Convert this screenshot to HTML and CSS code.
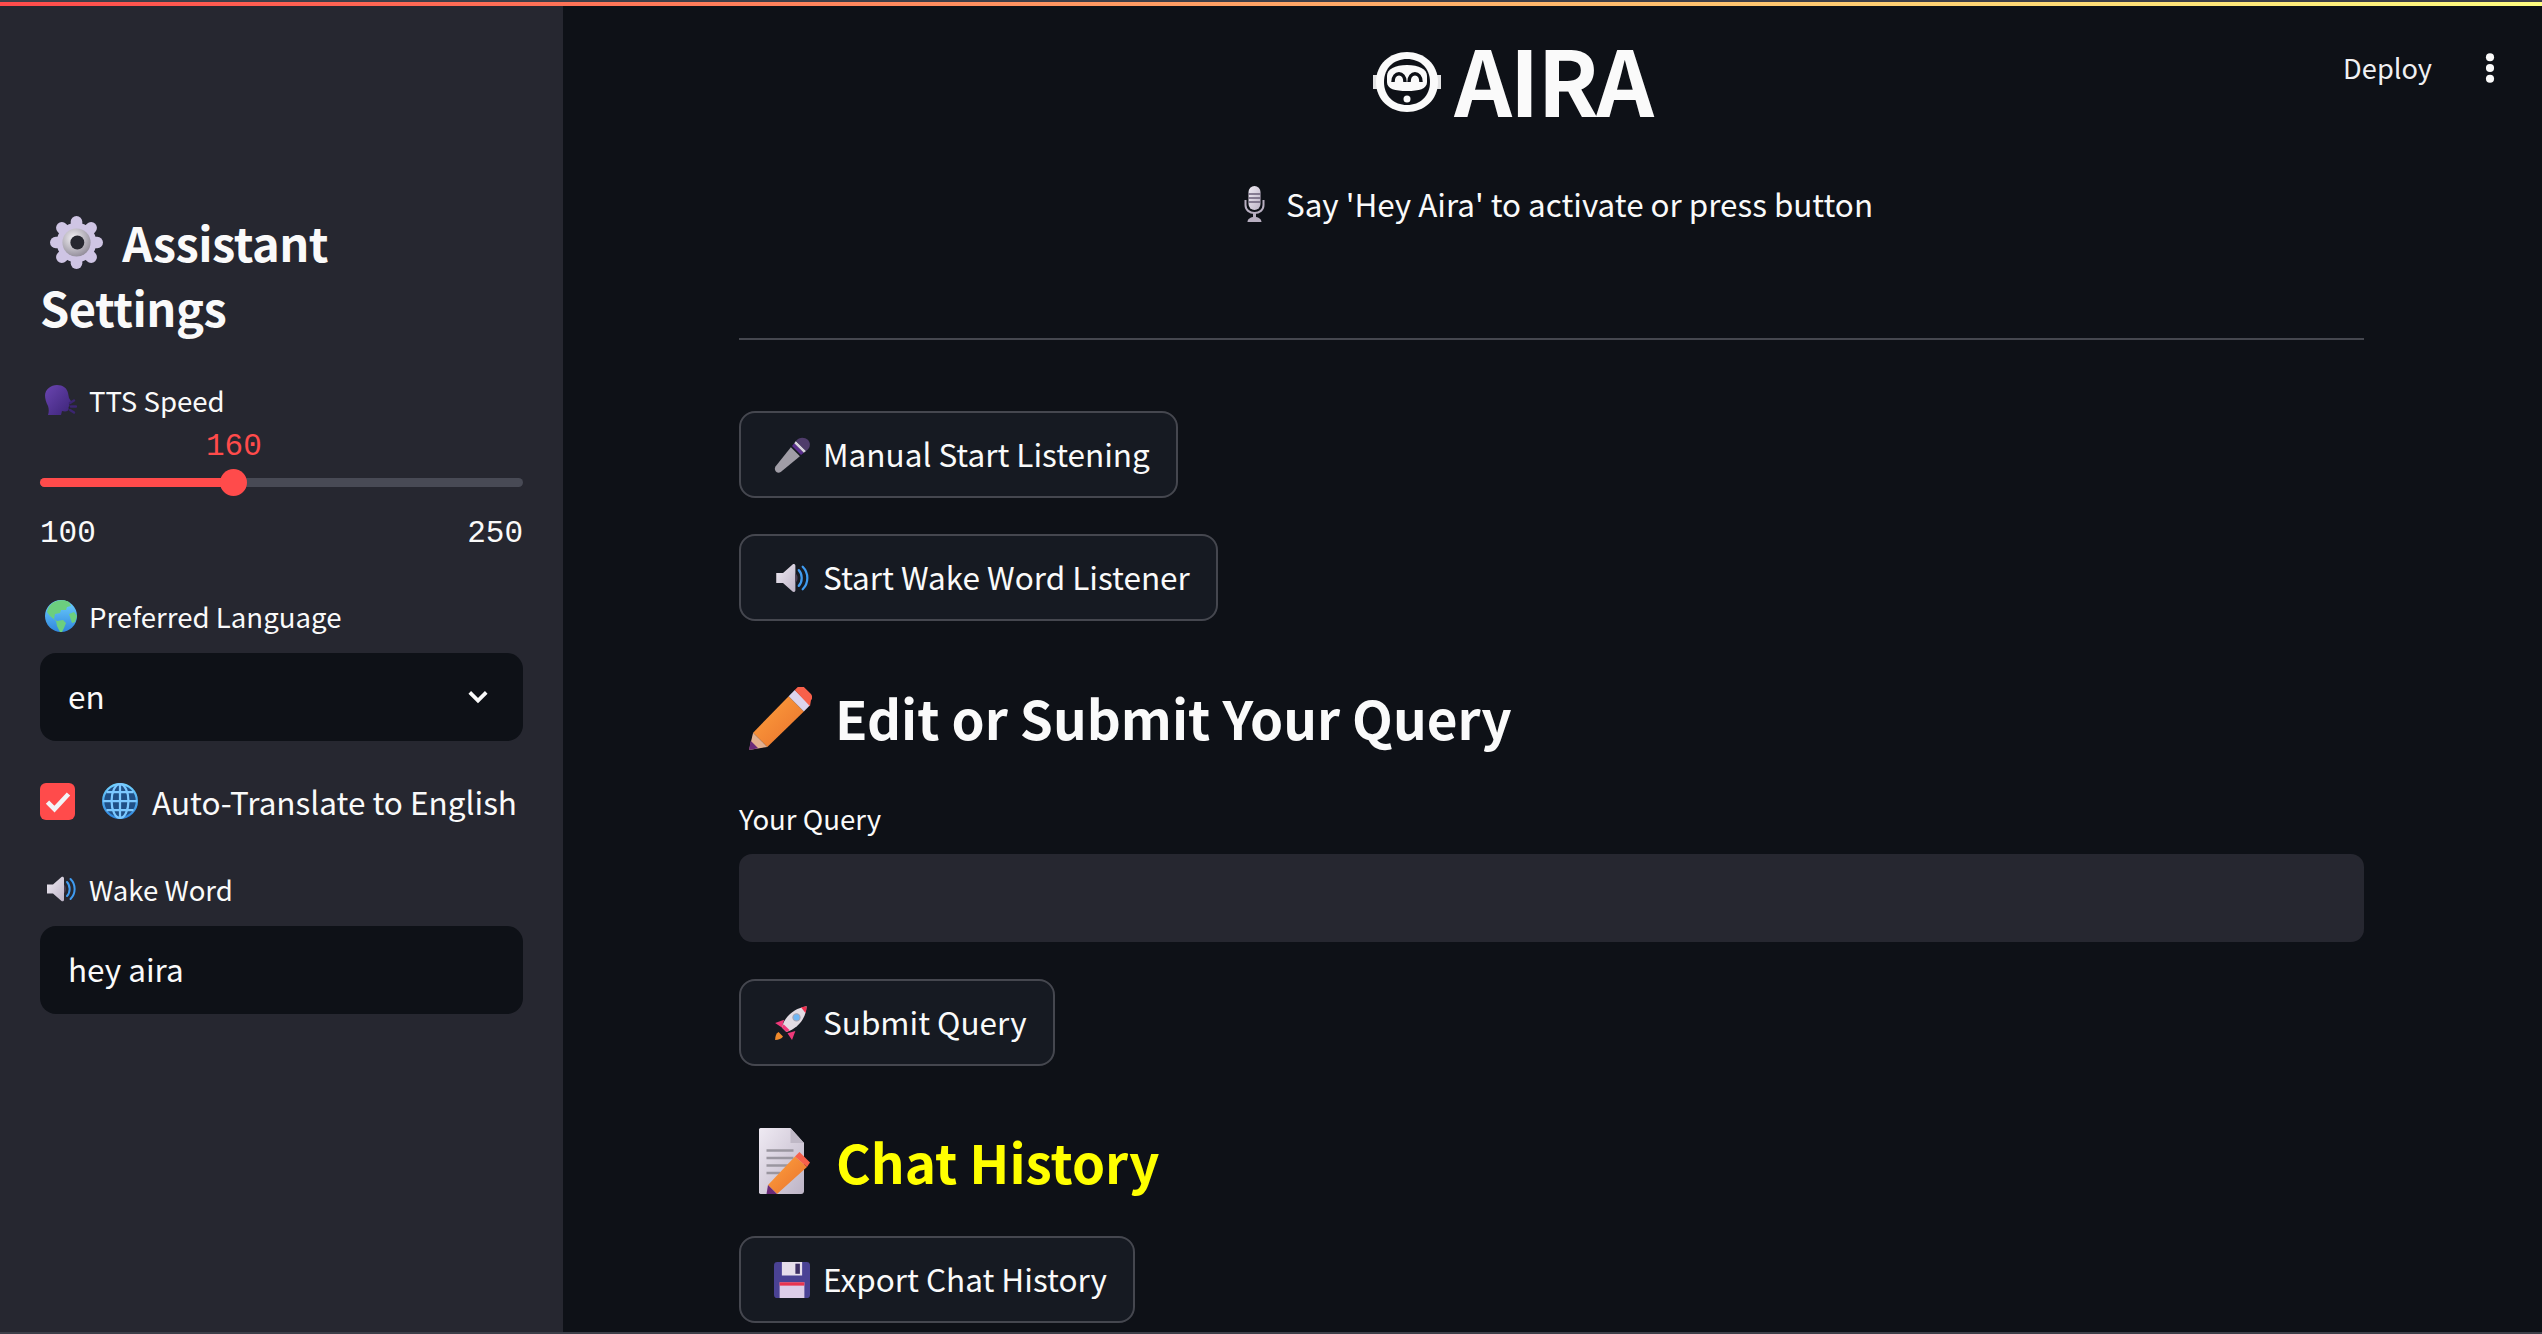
FILE: index.html
```html
<!DOCTYPE html>
<html lang="en">
<head>
  <meta charset="utf-8">
  <title>AIRA</title>
  <link rel="stylesheet" href="styles.css">
</head>
<body>
<svg class="defs" width="0" height="0">
  <defs>
    <linearGradient id="gGrey" x1="0" y1="0" x2="1" y2="1"><stop offset="0" stop-color="#efeaf3"/><stop offset="1" stop-color="#bdb4c6"/></linearGradient>
    <linearGradient id="gOrange" x1="0" y1="0" x2="1" y2="1"><stop offset="0" stop-color="#ffa23e"/><stop offset="1" stop-color="#e8702c"/></linearGradient>
    <linearGradient id="gBlue" x1="0" y1="0" x2="0" y2="1"><stop offset="0" stop-color="#6fd0ff"/><stop offset="1" stop-color="#2f86dd"/></linearGradient>
    <linearGradient id="gHead" x1="0" y1="0" x2="1" y2="1"><stop offset="0" stop-color="#6a45b0"/><stop offset="1" stop-color="#3c2478"/></linearGradient>
    <radialGradient id="gRing" cx=".4" cy=".35" r=".7"><stop offset="0" stop-color="#f4f2f6"/><stop offset="1" stop-color="#8f8a97"/></radialGradient>
    <symbol id="speaker" viewBox="0 0 32 32">
      <path d="M2 11.500h6L16.500 4c1-.8 2.500-.2 2.500 1.200v21.600c0 1.400-1.500 2-2.500 1.200L8 20.500H2z" fill="url(#gGrey)"/>
      <path d="M19 12c2.600 1 2.600 7 0 8z" fill="#4a3f55"/>
      <path d="M22 9c3.500 3.500 3.500 10.500 0 14M25.500 6c5.500 5.500 5.500 14.500 0 20" fill="none" stroke="#3f9bf0" stroke-width="2" stroke-linecap="round"/>
    </symbol>
    <symbol id="pencil" viewBox="0 0 32 32">
      <path d="M3 22.500 20.500 4.500l7.500 7.500L10 29.500z" fill="url(#gOrange)"/>
      <path d="M3 22.500 1 31l9-1.500z" fill="#e3b08f"/>
      <path d="M1 31l.8-4.500 3.700 3.700z" fill="#6a2a78"/>
      <path d="M20.500 4.500l3-3 7.500 7.500-3 3z" fill="#dcd3ec"/>
      <path d="M23.500 1.500l1.500-1.500c1-.8 2-.8 3 0l3.500 3.500c.8 1 .8 2 0 3l-.5 3z" fill="#f8604a"/>
    </symbol>
  </defs>
</svg>
<div class="topline"></div>
<div class="app">
  <aside class="sidebar">
    <h2 class="side-title">
      <svg class="emo emo-gear" viewBox="0 0 32 32">
        <g fill="#cfc5e4">
          <circle cx="16" cy="16" r="12"/>
          <rect x="12.500" y="0" width="7" height="32" rx="3.500"/>
          <rect x="12.500" y="0" width="7" height="32" rx="3.500" transform="rotate(45 16 16)"/>
          <rect x="12.500" y="0" width="7" height="32" rx="3.500" transform="rotate(90 16 16)"/>
          <rect x="12.500" y="0" width="7" height="32" rx="3.500" transform="rotate(135 16 16)"/>
        </g>
        <circle cx="16" cy="16" r="8.500" fill="url(#gRing)"/>
        <circle cx="16.500" cy="16" r="4.200" fill="#262730"/>
      </svg>
      Assistant Settings
    </h2>

    <div class="field-label field-tts">
      <svg class="emo emo-small" viewBox="0 0 32 32">
        <path d="M0 12C0 5 6 1 12 1c6 0 10 3 11 8l1 5 2.500 4-2.500 1 .5 3-1 1 .2 2c-.2 2-2.500 3-6.700 2l-1 4H3c1-3 1-6 0-9-2-4-3-7-3-11z" fill="url(#gHead)"/>
        <path d="M25 19l4-2.500M26 22.500h5M25 26l4 2.500" stroke="#3b2570" stroke-width="2.400" stroke-linecap="round"/>
      </svg>
      TTS Speed
    </div>
    <div class="slider">
      <div class="slider-value"><span>160</span></div>
      <div class="track">
        <div class="track-fill"></div>
        <div class="thumb"></div>
      </div>
      <div class="slider-ends"><span>100</span><span>250</span></div>
    </div>

    <div class="field-label field-lang">
      <svg class="emo emo-small" viewBox="0 0 32 32">
        <circle cx="16" cy="16" r="16" fill="url(#gBlue)"/>
        <path d="M12 1c3-1 9-1 12 1l2 4-4 1-1 3h-5l-1 3-5 1-1 5 3 2 6-1 3 3-2 5-2 4h-2l-3-6-1-5-6-5L2 12c1-5 4-9 10-11zM24 14l5-2 3 4-2 6-3 1z" fill="#6ccf7e"/>
      </svg>
      Preferred Language
    </div>
    <div class="select-box">
      <span>en</span>
      <svg class="chevron" viewBox="0 0 24 24"><path d="M3 7l9 9 9-9" fill="none" stroke="#fafafa" stroke-width="4"/></svg>
    </div>

    <div class="check-row">
      <span class="checkbox"><svg viewBox="0 0 24 24"><path d="M3 13l6 6L21 6" fill="none" stroke="#f3f3f6" stroke-width="4"/></svg></span>
      <svg class="emo emo-meridian" viewBox="0 0 32 32">
        <circle cx="16" cy="16" r="15" fill="#1f4f86" stroke="url(#gBlue)" stroke-width="2"/>
        <g fill="none" stroke="#7cc8ff" stroke-width="2">
          <ellipse cx="16" cy="16" rx="7.500" ry="15"/>
          <path d="M16 1v30M1 16h30M4 8h24M4 24h24"/>
        </g>
      </svg>
      <span>Auto-Translate to English</span>
    </div>

    <div class="field-label field-wake">
      <svg class="emo emo-small"><use href="#speaker"/></svg>
      Wake Word
    </div>
    <div class="select-box">hey aira</div>
  </aside>

  <main class="main">
    <header class="toolbar">
      <span class="deploy">Deploy</span>
      <svg class="dots" viewBox="0 0 8 28"><circle cx="4" cy="4" r="3.800"/><circle cx="4" cy="14" r="3.800"/><circle cx="4" cy="24" r="3.800"/></svg>
    </header>

    <div class="content">
      <h1 class="app-title">
        <svg class="face" viewBox="0 0 68 62">
          <path d="M3 31C3 13 17 1 34 1s31 12 31 30-14 30-31 30S3 49 3 31z" fill="#fafafa"/>
          <path d="M0 24h6v14H0zM62 24h6v14h-6z" fill="#fafafa" opacity=".9"/>
          <path d="M11 31C11 17 21 8 34 8s23 9 23 23-10 23-23 23-23-9-23-23z" fill="#0e1117"/>
          <path d="M14 25c0-7 8-11 20-11s20 4 20 11v6c0 7-8 9-20 9s-20-2-20-9z" fill="#fafafa"/>
          <path d="M20 31c0-11 12-11 12 0M36 31c0-11 12-11 12 0" fill="none" stroke="#0e1117" stroke-width="3.500"/>
          <circle cx="34" cy="48" r="3.500" fill="#fafafa"/>
        </svg>
        AIRA
      </h1>

      <p class="subtitle">
        <svg class="emo emo-studio" viewBox="0 0 20 36">
          <rect x="4" y="0" width="12" height="24" rx="6" fill="url(#gGrey)"/>
          <path d="M4 8h12M4 12h12M4 16h12" stroke="#6a5f78" stroke-width="1.500"/>
          <path d="M1 14v5c0 5 4 8 9 8s9-3 9-8v-5" fill="none" stroke="#b7aec0" stroke-width="2"/>
          <path d="M8.500 26h3v5h-3zM3 36c0-3 3-5 7-5s7 2 7 5z" fill="#b7aec0"/>
        </svg>
        Say 'Hey Aira' to activate or press button
      </p>

      <hr class="rule">

      <button class="btn">
        <svg class="emo emo-btn" viewBox="0 0 32 32">
          <path d="M15 9l8 8L6 31c-1.500 1-3.500 1-4.500-.5s-1-3 0-4.500z" fill="#a09da6"/>
          <path d="M16 8l8 8 2.500-2L18 5.500z" fill="#5a2f8c"/>
          <path d="M18 5.500l8.500 8.500 2-1.500L19.500 3.500z" fill="#d9d4df"/>
          <path d="M19.500 3.500c3-4 8-3.500 10.500-1s3 7-1.500 10z" fill="#4f3c6b"/>
        </svg>
        Manual Start Listening
      </button>

      <button class="btn">
        <svg class="emo emo-btn"><use href="#speaker"/></svg>
        Start Wake Word Listener
      </button>

      <h2 class="section section-edit">
        <svg class="emo emo-pencil"><use href="#pencil"/></svg>
        Edit or Submit Your Query
      </h2>

      <div class="field-label query-label">Your Query</div>
      <div class="query-input"></div>

      <button class="btn">
        <svg class="emo emo-btn" viewBox="0 0 32 32">
          <path d="M4 24c-2 1-3 4-3 7 3 0 6-1 7-3z" fill="#f08a2c"/>
          <path d="M9 13l-8 3 6 4zM19 23l-3 8-4-6z" fill="#f0397a"/>
          <path d="M7 20C9 11 17 3 29 1c-1 13-9 20-18 23z" fill="#e3dce4"/>
          <path d="M24 2l5-1c0 2-.3 4-1 6z" fill="#f0304f"/>
          <path d="M7 20l4 4 3-1.500-5.500-5.500z" fill="#f0397a"/>
          <circle cx="20" cy="11" r="3.200" fill="#6fb6f5" stroke="#a8a3b0"/>
        </svg>
        Submit Query
      </button>

      <h2 class="section section-chat">
        <svg class="emo emo-memo" viewBox="0 0 34 44">
          <path d="M1 0h20l9 10v32c0 1-.5 2-2 2H1c-.5 0-1-.5-1-1V1c0-.5.5-1 1-1z" fill="url(#gGrey)"/>
          <path d="M21 0l9 10h-9z" fill="#bfb8c6"/>
          <path d="M5 15h18M5 20h18M5 25h16M5 30h9" stroke="#9a96a0" stroke-width="1.600"/>
          <path d="M6 38l18-19 8 7-20 18z" fill="url(#gOrange)"/>
          <path d="M24 19l3-3 7 7-2 3z" fill="#f8604a"/>
          <path d="M6 38l-1 6 7 0z" fill="#6a2a78"/>
        </svg>
        <span>Chat History</span>
      </h2>

      <button class="btn">
        <svg class="emo emo-btn" viewBox="0 0 32 32">
          <rect x="0" y="0" width="32" height="32" rx="3" fill="#4a4294"/>
          <rect x="7" y="0" width="18" height="12" fill="#e6deeb"/>
          <rect x="19" y="1.500" width="4" height="9" fill="#3d2f63"/>
          <rect x="5" y="18" width="22" height="14" fill="#dccde8"/>
          <rect x="5" y="18" width="22" height="3" fill="#e8344f"/>
        </svg>
        Export Chat History
      </button>
    </div>
  </main>
</div>
<div class="bottomline"></div>
</body>
</html>
```

FILE: styles.css
```css
html, body {
    height: 100%;
    margin: 0;
    padding: 0;
    overflow: hidden;
}

body {
    background-color: #0e1117;
    color: #fafafa;
    font-family: "Noto Sans CJK JP", "Noto Sans", sans-serif;
    display: flex;
    flex-direction: column;
}

.defs {
    display: block;
    height: 0;
    flex: none;
}

h1, h2, p {
    margin: 0;
}

.topline {
    flex: none;
    height: 4px;
    border-top: 2px solid #3d3f49;
    background: linear-gradient(90deg, #ff4b4b, #fffd80);
}

.bottomline {
    flex: none;
    height: 2px;
    background: #3d3f49;
}

.app {
    flex: 1;
    display: flex;
    min-height: 0;
}

/* sidebar */

.sidebar {
    flex: none;
    width: 563px;
    box-sizing: border-box;
    padding: 203px 40px 0;
    background: #262730;
}

.side-title {
    font-size: 47px;
    font-weight: 700;
    line-height: 65px;
    letter-spacing: -0.5px;
}

.emo {
    display: inline-block;
    flex: none;
}

.emo-gear {
    width: 53px;
    height: 53px;
    margin: 0 9px 0 10px;
    vertical-align: -7px;
}

.field-label {
    font-size: 27.6px;
    line-height: 40px;
    display: flex;
    align-items: center;
    gap: 12px;
}

.field-tts {
    margin-top: 41px;
}

.field-lang {
    margin-top: 45px;
}

.field-wake {
    margin-top: 46px;
}

.emo-small {
    width: 32px;
    height: 32px;
    margin-left: 5px;
}

.slider-value {
    font-family: "Liberation Mono", monospace;
    font-size: 31px;
    line-height: 34px;
    color: #ff4b4b;
    padding-left: 166px;
    margin-top: 10px;
}

.track {
    position: relative;
    height: 9px;
    margin-top: 14px;
    border-radius: 5px;
    background: #484a55;
}

.track-fill {
    width: 193px;
    height: 100%;
    border-radius: 5px;
    background: #ff4b4b;
}

.thumb {
    position: absolute;
    left: 180px;
    top: -9px;
    width: 27px;
    height: 27px;
    border-radius: 50%;
    background: #ff4b4b;
}

.slider-ends {
    display: flex;
    justify-content: space-between;
    font-family: "Liberation Mono", monospace;
    font-size: 31px;
    line-height: 34px;
    margin-top: 30px;
}

.select-box {
    height: 88px;
    box-sizing: border-box;
    margin-top: 17px;
    padding: 0 34px 4px 28px;
    border-radius: 16px;
    background: #0e1117;
    font-size: 31.5px;
    display: flex;
    align-items: center;
    justify-content: space-between;
}

.chevron {
    width: 22px;
    height: 22px;
    margin-top: 4px;
}

.check-row {
    display: flex;
    align-items: center;
    margin-top: 38px;
    font-size: 31.5px;
    line-height: 44px;
    white-space: nowrap;
}

.checkbox {
    width: 35px;
    height: 37px;
    border-radius: 6px;
    background: #ff4b4b;
    display: flex;
    align-items: center;
    justify-content: center;
}

.checkbox svg {
    width: 28px;
    height: 28px;
}

.emo-meridian {
    width: 36px;
    height: 38px;
    margin: 0 14px 0 27px;
}

/* main */

.main {
    flex: 1;
    min-width: 0;
    position: relative;
}

.toolbar {
    position: absolute;
    top: 39px;
    right: 47px;
    display: flex;
    align-items: center;
    gap: 53px;
}

.deploy {
    font-size: 27.2px;
    line-height: 44px;
    color: #f0f0f2;
}

.dots {
    width: 10px;
    height: 30px;
    margin-top: 2px;
    fill: #fafafa;
}

.content {
    width: 1625px;
    margin-left: 176px;
}

.app-title {
    height: 131px;
    box-sizing: border-box;
    padding: 12px 78px 0 0;
    font-size: 90px;
    font-weight: 700;
    line-height: 142px;
    display: flex;
    align-items: center;
    justify-content: center;
    gap: 13px;
    letter-spacing: -2px;
}

.face {
    width: 68px;
    height: 62px;
    margin-top: 8px;
}

.subtitle {
    margin-top: 45px;
    padding-left: 11px;
    font-size: 31.4px;
    line-height: 44px;
    display: flex;
    align-items: center;
    justify-content: center;
    gap: 18px;
}

.emo-studio {
    width: 27px;
    height: 36px;
}

.rule {
    border: none;
    height: 2px;
    margin: 112px 0 71px;
    background: #45474f;
}

.btn {
    display: flex;
    align-items: center;
    gap: 13px;
    height: 87px;
    box-sizing: border-box;
    margin-bottom: 36px;
    padding: 0 26px 3px 33px;
    border: 2px solid #45474f;
    border-radius: 16px;
    background: #161a22;
    color: #fafafa;
    font-family: inherit;
    font-size: 31.5px;
}

.emo-btn {
    width: 36px;
    height: 38px;
    margin-top: 3px;
}

.section {
    font-size: 53px;
    font-weight: 700;
    line-height: 76px;
    display: flex;
    align-items: center;
}

.section-edit {
    margin-top: 58px;
    gap: 23px;
}

.emo-pencil {
    width: 65px;
    height: 65px;
    margin: 5px 0 0 8px;
}

.query-label {
    margin-top: 43px;
}

.query-input {
    height: 88px;
    margin: 16px 0 37px;
    border-radius: 13px;
    background: #262730;
}

.section-chat {
    margin-top: 57px;
    gap: 25px;
    color: #ffff00;
    margin-bottom: 37px;
}

.emo-memo {
    width: 53px;
    height: 66px;
    margin-left: 19px;
}
```
